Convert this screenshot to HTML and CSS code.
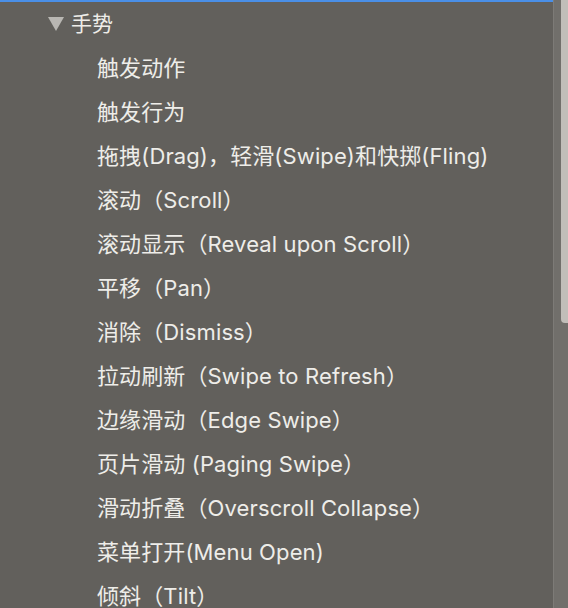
FILE: index.html
```html
<!DOCTYPE html>
<html lang="zh-CN">
<head>
<meta charset="utf-8">
<link rel="stylesheet" href="styles.css">
</head>
<body>
<div class="window">
  <div class="panel">
    <div class="focus-bar"></div>
    <ul class="tree">
      <li class="group"><span class="arrow"></span><span class="label">手势</span></li>
      <li class="item">触发动作</li>
      <li class="item">触发行为</li>
      <li class="item">拖拽(Drag)，轻滑(Swipe)和快掷(Fling)</li>
      <li class="item">滚动（Scroll）</li>
      <li class="item">滚动显示（Reveal upon Scroll）</li>
      <li class="item">平移（Pan）</li>
      <li class="item">消除（Dismiss）</li>
      <li class="item">拉动刷新（Swipe to Refresh）</li>
      <li class="item">边缘滑动（Edge Swipe）</li>
      <li class="item">页片滑动 (Paging Swipe）</li>
      <li class="item">滑动折叠（Overscroll Collapse）</li>
      <li class="item">菜单打开(Menu Open)</li>
      <li class="item">倾斜（Tilt）</li>
    </ul>
  </div>
  <div class="scroll-track"><div class="scroll-thumb"></div></div>
</div>
</body>
</html>
```

FILE: styles.css
```css
html, body {
  margin: 0;
  padding: 0;
  height: 100%;
  overflow: hidden;
  background: #62605c;
}
.window {
  display: flex;
  height: 608px;
  width: 568px;
}
.panel {
  flex: 1;
  display: flex;
  flex-direction: column;
  background: #62605c;
  overflow: hidden;
}
.focus-bar {
  height: 2px;
  background: #4a8fe7;
  flex: none;
}
.tree {
  list-style: none;
  margin: 0;
  padding: 0;
  font-family: Inter, "Noto Sans CJK SC", sans-serif;
  font-size: 22px;
  letter-spacing: 0.12px;
  color: #eeede9;
}
.tree li {
  height: 44px;
  line-height: 44px;
  white-space: nowrap;
}
.group {
  display: flex;
  align-items: center;
  padding-left: 48px;
  gap: 7px;
  font-size: 21px;
}
.arrow {
  width: 0;
  height: 0;
  border-left: 8px solid transparent;
  border-right: 8px solid transparent;
  border-top: 14px solid #b9b7b3;
}
.item {
  padding-left: 97px;
}
.scroll-track {
  width: 14px;
  flex: none;
  background: #716f6b;
  border-left: 1px solid #7d7b77;
  display: flex;
  justify-content: flex-end;
}
.scroll-thumb {
  width: 7px;
  height: 323px;
  background: #c1beb9;
  border-radius: 0 0 0 4px;
}
```
